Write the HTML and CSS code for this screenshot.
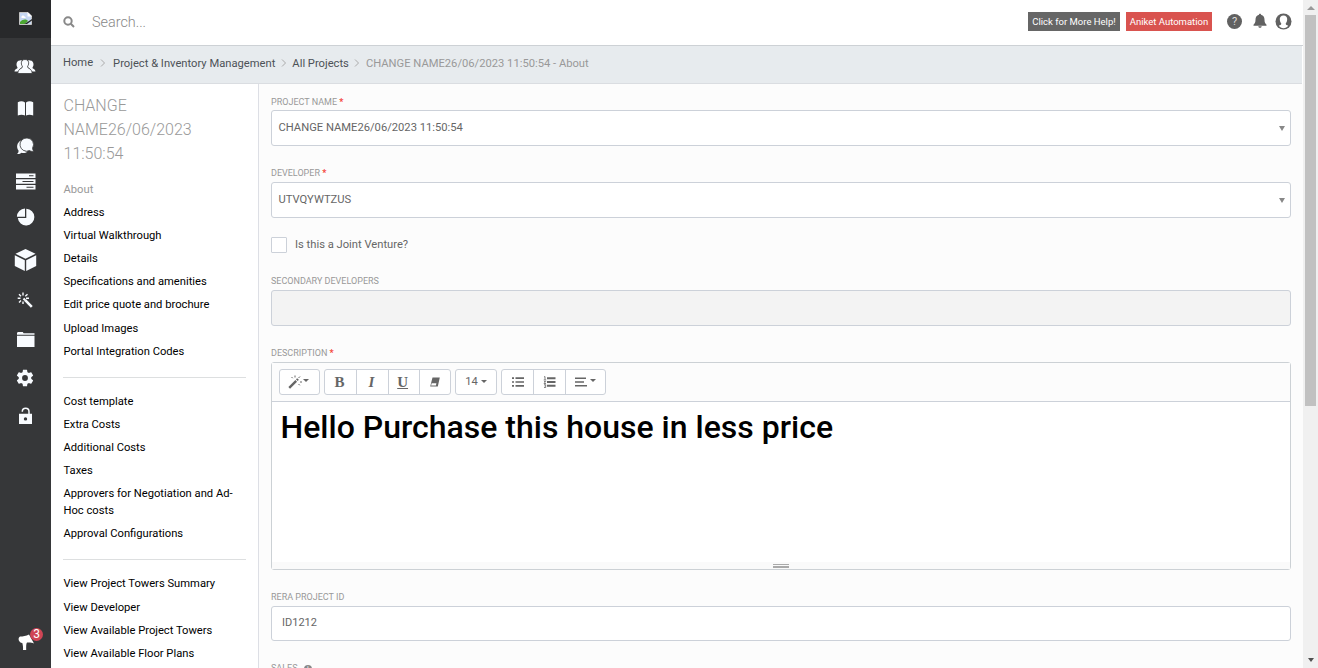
FILE: index.html
```html
<!DOCTYPE html>
<html lang="en">
<head>
<meta charset="utf-8">
<title>About project</title>
<link rel="stylesheet" href="styles.css">
</head>
<body>
<div class="app">
  <nav class="rail">
    <div class="logo">
      <svg width="16" height="16" viewBox="0 0 16 16"><path d="M1.500 1.500h8.500l3.500 3.500v8.500h-12z" fill="#c6d7f3" stroke="#c4c4c4"/><path d="M9.500 1v4.500H14z" fill="#fff"/><path d="M3.500 6.500a1.500 1.500 0 0 1 3-1 1 1 0 0 1 1 1.500h-4z" fill="#fff"/><path d="M2 13v-2c3-3 6-3 8-1l-3 3z" fill="#4ca632"/><path d="M6.500 13l7.500-5v1.500L9 13z" fill="#28292b"/></svg>
    </div>
    <svg class="ico people" viewBox="0 0 22 22"><path d="M6 4.500c2-.6 3.500.8 3 3.300-.2 1.500-.8 2-.7 3 .3.900-3.300 1.800-3.300 4.700H.5c.1-2.500 3-2.500 3-3.700 0-.8-1-1.300-1-3.300C2.500 6.300 3.500 4.500 6 4.500zM16 4.500c-2-.6-3.500.8-3 3.300.2 1.500.8 2 .7 3-.3.900 3.300 1.800 3.300 4.700h4.500c-.1-2.500-3-2.500-3-3.700 0-.8 1-1.300 1-3.300 0-2.200-1-4-3.500-4z"/><path class="cut" d="M11 3.500c2.800 0 4 1.800 3.600 4.500-.2 1.500-1.100 2-1 3 .2 1.500 4.400 1.500 4.600 6.500H3.800c.2-5 4.400-5 4.600-6.500.1-1-.8-1.500-1-3C7 5.300 8.200 3.500 11 3.500z"/></svg>
    <svg class="ico book" viewBox="0 0 22 22"><path d="M3.800 5.300c2.500-1.300 5-1.300 7.200.3v13c-2.200-1.200-4.700-1.200-7.200 0zM12 5.600c2.200-1.600 4.700-1.600 7.200-.3v13.300c-2.500-1.200-5-1.200-7.200 0z"/></svg>
    <svg class="ico chat" viewBox="0 0 22 22"><path d="M7 5.500C3 7.500 2 12 4.500 15.500c.2 1.500-.3 2.500-1.500 3.500 2 .2 3.500-.3 4.500-1.200 2 .7 4.500.2 6-1.300-5.500.1-8-5-6.500-11z"/><path class="cut" d="M13 3a6.600 6.600 0 0 1 5.600 10c.1 1.500.4 2.500 1.200 3.500-2 .1-3.200-.3-4.300-1A6.600 6.600 0 1 1 13 3z"/></svg>
    <svg class="ico server" viewBox="0 0 22 22"><path d="M2 3.500h19.500v4.500H2zM2 9.300h19.500v4.400H2zM2 15h19.500v4.500H2z"/><path class="dark" d="M15 5.200h4.500v1H15zM8.500 11h11v1h-11zM12.500 16.800h7v1h-7z"/></svg>
    <svg class="ico pie" viewBox="0 0 22 22"><path d="M12.300 2.800a8.300 8.300 0 1 1-8.500 9.200h8.500zM11 2.500v8.200H2.900A8.200 8.200 0 0 1 11 2.500z"/></svg>
    <svg class="ico cube" viewBox="0 0 22 22"><path d="M11.500 0l10 4.800-10 5-10-5zM.8 6.200l10 5.100V22l-10-5zM22.200 6.200l-10 5.100V22l10-5z"/></svg>
    <svg class="ico wand" viewBox="0 0 22 22"><path class="line" d="M9.500 9.500l1.700 1.700" stroke-width="2.200"/><path class="line" d="M11.200 11.200l6.600 6.600" stroke-width="2.600"/><path class="line" d="M9 3.500v3M9 12.500v2.500M3.700 9.300h2.800M12 9.300h3M5 5.200l2 2M13.500 5.200l-2.200 2M5 13.500l2-2" stroke-width="1.400"/></svg>
    <svg class="ico folder" viewBox="0 0 22 22"><path d="M3 4l.8-1h5l.8 1.200h10.900v1.500H3zM3 6.700h17.500V18H3z"/></svg>
    <svg class="ico gear" viewBox="0 0 24 24"><path d="M19.430 12.980c.04-.32.070-.64.070-.98s-.03-.66-.07-.98l2.110-1.650c.19-.15.240-.42.120-.64l-2-3.460c-.12-.22-.39-.3-.61-.22l-2.490 1c-.52-.4-1.080-.73-1.690-.98l-.38-2.650A.488.488 0 0 0 14 2h-4c-.25 0-.46.180-.49.420l-.38 2.650c-.61.250-1.170.59-1.690.98l-2.490-1c-.23-.09-.49 0-.61.220l-2 3.460c-.13.220-.07.490.120.640l2.110 1.650c-.04.320-.07.650-.07.980s.03.660.070.980l-2.110 1.650c-.19.150-.24.420-.12.640l2 3.460c.12.220.390.300.610.220l2.490-1c.52.400 1.080.730 1.690.980l.38 2.650c.03.240.240.420.490.420h4c.25 0 .46-.18.490-.42l.38-2.650c.61-.25 1.170-.59 1.690-.98l2.490 1c.23.090.490 0 .61-.22l2-3.460c.12-.22.070-.49-.12-.64l-2.110-1.650zM12 15.500a3.500 3.500 0 1 1 0-7 3.500 3.500 0 0 1 0 7z"/></svg>
    <svg class="ico lock" viewBox="0 0 22 22"><path fill-rule="evenodd" d="M5 8.800h13V19H5zM11.500 12.200a1.700 1.700 0 1 0 0 3.400 1.700 1.700 0 0 0 0-3.400z"/><path class="line" d="M8.300 6.800c0-4.600 6.700-4.600 6.700 0v2.500" stroke-width="1.500"/></svg>
    <div class="notice">
      <svg class="horn" viewBox="0 0 20 18"><path d="M3 3.500C6 3.500 9 3 12 1.500l5 9c-2-1-4-1.200-7-1-1 1.500-.8 4-.8 7.500H6c.3-3-.2-5-.7-7C1.500 9.500.5 5 3 3.500z"/></svg>
      <span class="count">3</span>
    </div>
  </nav>
  <div class="main">
    <header class="top">
      <svg class="search-ico" viewBox="0 0 12 12"><circle cx="5" cy="5" r="3.700"/><path d="M7.800 7.800l3.200 3.200"/></svg>
      <span class="search">Search...</span>
      <span class="tag help">Click for More Help!</span>
      <span class="tag user">Aniket Automation</span>
      <div class="top-icons">
        <span class="question">?</span>
        <svg class="bell" width="14" height="16" viewBox="0 0 14 16"><path d="M7 .8c.7 0 1 .4 1 1 2.500.6 3.500 2.400 3.500 5 0 2.700.7 3.900 2 4.900v1H.5v-1c1.300-1 2-2.200 2-4.900 0-2.600 1-4.400 3.500-5 0-.6.300-1 1-1zM5.300 13.300h3.400c-.2 2-3.200 2-3.400 0z"/></svg>
        <svg class="face" width="17" height="17" viewBox="0 0 17 17"><circle cx="8.500" cy="8.500" r="8"/><path d="M8.500 2.500c2.600 0 3.900 1.800 3.700 4.300-.2 1.800-.8 3-1.500 3.800.1 1.500 1.200 1.600 2.500 2.200-1 1.400-2.800 2.400-4.700 2.400s-3.700-1-4.700-2.400c1.300-.6 2.400-.7 2.500-2.200-.7-.8-1.300-2-1.500-3.800C4.600 4.300 5.900 2.500 8.500 2.500z" fill="#fff"/></svg>
      </div>
    </header>
    <div class="crumbs">
      <span class="home">Home</span><svg class="sep first" viewBox="0 0 6 8"><path d="M1 .5l3.500 3.500L1 7.500"/></svg>
      <span>Project &amp; Inventory Management</span><svg class="sep" viewBox="0 0 6 8"><path d="M1 .5l3.500 3.500L1 7.500"/></svg>
      <span>All Projects</span><svg class="sep" viewBox="0 0 6 8"><path d="M1 .5l3.500 3.500L1 7.500"/></svg>
      <span class="current">CHANGE NAME26/06/2023 11:50:54 - About</span>
    </div>
    <div class="body">
      <aside class="menu">
        <h1>CHANGE NAME26/06/2023 11:50:54</h1>
        <ul>
          <li class="active">About</li><li>Address</li><li>Virtual Walkthrough</li><li>Details</li><li>Specifications and amenities</li><li>Edit price quote and brochure</li><li>Upload Images</li><li>Portal Integration Codes</li>
        </ul>
        <ul>
          <li>Cost template</li><li>Extra Costs</li><li>Additional Costs</li><li>Taxes</li><li>Approvers for Negotiation and Ad-Hoc costs</li><li>Approval Configurations</li>
        </ul>
        <ul>
          <li>View Project Towers Summary</li><li>View Developer</li><li>View Available Project Towers</li><li>View Available Floor Plans</li>
        </ul>
      </aside>
      <section class="form">
        <div class="field"><div class="label lead">PROJECT NAME <b>*</b></div><div class="input select">CHANGE NAME26/06/2023 11:50:54<i class="arrow"></i></div></div>
        <div class="field"><div class="label">DEVELOPER <b>*</b></div><div class="input select">UTVQYWTZUS<i class="arrow"></i></div></div>
        <div class="check"><span class="box"></span><span>Is this a Joint Venture?</span></div>
        <div class="field"><div class="label">SECONDARY DEVELOPERS</div><div class="input disabled"></div></div>
        <div class="field">
          <div class="label">DESCRIPTION <b>*</b></div>
          <div class="editor">
            <div class="toolbar">
              <div class="group"><span class="btn style"><svg width="14" height="14" viewBox="0 0 14 14"><path d="M1.200 12.800l7-7" stroke-width="2.400"/><path d="M8.800 5.200l1.200-1.200" stroke-width="2.400"/><path d="M7 .5v2M3.500 2l1.200 1.200M10.500 3l1.500-1.500M12 7h2M10.500 9l1.300 1.300" stroke-width="1"/></svg><i class="caret"></i></span></div>
              <div class="group"><span class="btn serif bold">B</span><span class="btn serif ital">I</span><span class="btn serif under">U</span><span class="btn"><svg width="12" height="12" viewBox="0 0 12 12"><path class="solid" fill-rule="evenodd" d="M3.500 1.500h7.300L8.800 10.500H1.200zM2.700 7.200h4.700l-.5 2.300H2.100z"/></svg></span></div>
              <div class="group"><span class="btn size">14<i class="caret gap"></i></span></div>
              <div class="group"><span class="btn"><svg width="12" height="10" viewBox="0 0 12 10"><path d="M0 1.200h2M0 5h2M0 8.800h2M3.500 1.200H12M3.500 5H12M3.500 8.800H12" stroke-width="1.700"/></svg></span><span class="btn"><svg width="13" height="12" viewBox="0 0 13 12"><path d="M4 2.200h8.500M4 6h8.500M4 9.800h8.500" stroke-width="1.900"/><path d="M1 1l1-.5V4M.7 4h2.500M1 5.500h1.700L1 7.500h2M1 8.700h1.700v2.800H1M1.500 10h1" stroke-width=".8"/></svg></span><span class="btn align"><svg width="12" height="10" viewBox="0 0 12 10"><path d="M0 1.200h11M0 5h9M0 8.800h12" stroke-width="1.600"/></svg><i class="caret gap"></i></span></div>
            </div>
            <div class="content">Hello Purchase this house in less price</div>
            <div class="resize"><i></i></div>
          </div>
        </div>
        <div class="field"><div class="label">RERA PROJECT ID</div><div class="input text">ID1212</div></div>
        <div class="field"><div class="label">SALES <span class="info">i</span></div></div>
      </section>
    </div>
  </div>
  <div class="scroll"><i class="up"></i><div class="thumb"></div><i class="down"></i></div>
</div>
</body>
</html>
```
FILE: styles.css
```css
* { box-sizing: border-box; }
body { margin: 0; font-family: Roboto, sans-serif; font-size: 11.200px; color: #666; overflow: hidden; }
.app { display: flex; height: 668px; background: #fff; overflow: hidden; }

.rail { width: 51px; flex: none; background: #363739; display: flex; flex-direction: column; align-items: flex-start; }
.logo { width: 51px; height: 38px; background: #28292b; display: flex; justify-content: center; padding-top: 11px; flex: none; }
.ico { width: 22px; height: 22px; margin-left: 14px; flex: none; fill: #f8fbff; overflow: visible; }
.line { fill: none; stroke: #f8fbff; }
.cut { stroke: #363739; stroke-width: .8; }
.dark { fill: #363739; }
.people { margin-top: 18px; }
.book { margin-top: 19px; }
.chat { margin-top: 16px; }
.server { margin-top: 13px; }
.pie { margin-top: 14px; }
.cube { margin-top: 21px; }
.wand { margin-top: 18px; }
.folder { margin-top: 18px; }
.gear { width: 20px; height: 20px; margin: 17px 0 1px 15px; }
.lock { margin-top: 16px; }
.notice { position: relative; width: 51px; height: 18px; margin: auto 0 17px; padding-left: 17px; }
.horn { width: 20px; height: 18px; fill: #fff; }
.count { position: absolute; left: 30px; top: -5px; width: 13px; height: 13px; border-radius: 50%; background: #d04555; color: #fff; font-size: 12px; line-height: 13px; text-align: center; }

.main { flex: 1; min-width: 0; display: flex; flex-direction: column; }
.top { height: 46px; flex: none; border-bottom: 1px solid #cdd1d5; display: flex; align-items: center; padding: 0 12px 2px; }
.search-ico { width: 12px; height: 12px; fill: none; stroke: #888; stroke-width: 2; }
.search { flex: 1; margin: 1px 0 0 17px; font-size: 14.400px; font-weight: 300; color: #888; }
.tag { height: 19px; line-height: 19px; font-size: 9.500px; color: #fff; text-align: center; white-space: nowrap; }
.help { width: 92px; background: #666; margin-right: 6px; }
.user { width: 86px; background: #d9534f; }
.top-icons { display: flex; align-items: center; margin-left: 15px; fill: #616161; }
.question { width: 15px; height: 15px; border-radius: 50%; background: #616161; color: #ddd; font-size: 11px; line-height: 15px; text-align: center; }
.bell { margin-left: 11px; margin-top: -1px; }
.face { margin-left: 8px; margin-right: -1px; margin-top: -1px; }
.crumbs { height: 38px; flex: none; background: #e7ebee; border-bottom: 1px solid #dadde1; display: flex; align-items: center; padding: 0 0 3px 12px; margin-right: 1px; color: #4d5257; white-space: nowrap; }
.home { margin-top: -2px; }
.sep { width: 6px; height: 8px; margin: 0 5.500px; fill: none; stroke: #aaa; }
.first { margin: 0 7.500px 0 6.500px; }
.current { color: #999; }

.body { flex: 1; min-height: 0; display: flex; }
.menu { width: 208px; flex: none; border-right: 1px solid #dddfe5; padding: 10px 12px 0; color: #000; overflow: hidden; }
.menu h1 { margin: 0 0 12px .5px; width: 150px; font-size: 16px; line-height: 24px; font-weight: 300; color: #999; }
.menu ul { list-style: none; margin: 0; padding: 0 0 14px; }
.menu ul + ul { border-top: 1px solid #dddfe0; padding-top: 12px; }
.menu li { line-height: 17.100px; padding: 3px 0 3px .5px; }
.menu .active { color: #999; }

.form { flex: 1; background: #fcfcfc; padding: 8px 12px 0; overflow: hidden; }
.field { margin-bottom: 18px; }
.label { height: 18px; line-height: 18px; font-size: 9px; color: #999; white-space: nowrap; }
.lead { padding-top: 1px; }
.label b { color: #f44336; font-size: 9px; }
.input { height: 36px; border: 1px solid #ccd1d9; border-radius: 3px; background: #fff; padding: 0 7px; line-height: 33px; }
.select { display: flex; justify-content: space-between; align-items: center; padding: 0 5.500px 2px 6.500px; }
.arrow { border: 3px solid transparent; border-top: 5px solid #888; border-bottom: 0; margin-top: 2px; }
.disabled { background: #f3f3f3; }
.text { height: 35px; padding-left: 10px; line-height: 32px; font-size: 11px; }
.check { height: 16px; margin: 19px 0; display: flex; gap: 8px; line-height: 15px; }
.box { width: 16px; height: 16px; border: 1px solid #ccd1d9; background: #fff; border-radius: 1px; }

.editor { height: 208px; border: 1px solid #ccd1d5; border-radius: 3px; background: #fff; display: flex; flex-direction: column; }
.toolbar { height: 39px; border-bottom: 1px solid #ccd1d9; background: #fcfcfc; display: flex; gap: 4px; padding: 6px 7px; }
.group { display: flex; height: 26px; border: 1px solid #ccd1d9; border-radius: 3px; background: #fff; }
.btn { width: 31.250px; display: flex; align-items: center; justify-content: center; color: #666; }
.btn + .btn { border-left: 1px solid #ccd1d9; }
.btn svg { fill: none; stroke: #666; }
.btn .solid { fill: #666; stroke: none; }
.style { width: 39px; padding-right: 2px; }
.size { width: 40px; padding-bottom: 2px; }
.btn.align { width: 40.500px; }
.serif { font-family: "Liberation Serif", serif; font-size: 15px; padding-right: 2px; }
.bold { font-weight: 700; }
.ital { font-weight: 700; font-style: italic; }
.under { font-weight: 700; text-decoration: underline; }
.caret { border: 3px solid transparent; border-top: 3px solid #666; border-bottom: 0; margin-left: 1px; margin-top: -3px; }
.gap { margin-left: 3px; }
.size .caret { margin-top: 0; }
.content { flex: 1; padding: 0 8.500px; color: #000; font-size: 32px; line-height: 50px; font-weight: 500; white-space: nowrap; }
.resize { height: 7px; background: #fafafa; display: flex; justify-content: center; }
.resize i { width: 16px; height: 4px; margin-top: 2px; border-top: 1px solid #aaa; border-bottom: 2px solid #aaa; }
.info { display: inline-block; width: 8px; height: 8px; margin-left: 4px; border-radius: 50%; background: #888; color: #fff; font-size: 7px; line-height: 8px; text-align: center; }

.scroll { width: 15px; flex: none; background: #f0f0f0; display: flex; flex-direction: column; align-items: center; }
.up { border: 4px solid transparent; border-top: 0; border-bottom: 4px solid #999; margin-top: 6px; }
.thumb { width: 11px; height: 391px; margin-top: 5px; background: #c1c1c1; }
.down { border: 3px solid transparent; border-top: 4px solid #505050; border-bottom: 0; margin: auto 0 6px; }
```
